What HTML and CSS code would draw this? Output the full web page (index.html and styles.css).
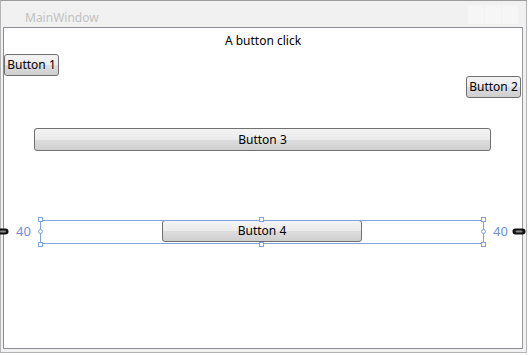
FILE: index.html
```html
<!DOCTYPE html>
<html lang="en">
<head>
    <meta charset="UTF-8">
    <title>MainWindow</title>
    <link rel="stylesheet" href="styles.css">
</head>
<body>
    <div class="window">
        <div class="title-bar">
            <span class="title">MainWindow</span>
            <div class="caption-buttons">
                <span></span><span></span><span></span>
            </div>
        </div>
        <div class="content">
            <p class="caption">A button click</p>
            <button class="btn btn-1">Button 1</button>
            <button class="btn btn-2">Button 2</button>
            <button class="btn btn-3">Button 3</button>
            <button class="btn btn-4">Button 4</button>

            <!-- designer selection adorner -->
            <div class="selection">
                <span class="handle tl"></span>
                <span class="handle tm"></span>
                <span class="handle tr"></span>
                <span class="handle bl"></span>
                <span class="handle bm"></span>
                <span class="handle br"></span>
                <span class="knob left"></span>
                <span class="knob right"></span>
            </div>
            <span class="margin-label left">40</span>
            <span class="margin-label right">40</span>
            <svg class="anchor left" width="12" height="7" viewBox="0 0 12 7">
                <rect x="0.5" y="0.5" width="11" height="6" rx="3" fill="#111"/>
                <rect x="3" y="2.5" width="6" height="2" rx="1" fill="#888"/>
            </svg>
            <svg class="anchor right" width="14" height="7" viewBox="0 0 14 7">
                <rect x="0.5" y="0.5" width="13" height="6" rx="3" fill="#111"/>
                <rect x="3.5" y="2.5" width="7" height="2" rx="1" fill="#888"/>
            </svg>
        </div>
    </div>
</body>
</html>
```

FILE: styles.css
```css
:root {
    --frame: #f1f1f1; --frame-line: #b4b4b4; --content-line: #8a8d93;
    --title-gray: #c2c2c2; --btn-border: #707070; --adorner: #7fa4dc;
    --label-blue: #6d8fd4;
}
body { margin: 0; background: #ffffff; font-family: "Noto Sans", "Open Sans", sans-serif; }
.window { width: 525px; height: 351px; border: 1px solid var(--frame-line); border-top-color: #9c9c9c; background: var(--frame); display: flex; flex-direction: column; }
.title-bar { height: 26px; display: flex; align-items: center; justify-content: space-between; padding: 0 8px 0 24px; }
.title { font-size: 12px; color: var(--title-gray); padding-top: 6px; }
.caption-buttons { display: flex; gap: 1px; align-self: flex-start; margin-top: 4px; }
.caption-buttons span { width: 16px; height: 19px; background: #f6f6f6; }
.content { position: relative; flex: 1; margin: 0 3px 3px 2px; border: 1px solid var(--content-line); border-right-color: #9a9a9a; background: #ffffff; }
.caption { margin: 5px 0 0; text-align: center; font-size: 12px; line-height: 16px; color: #000; }
.btn { display: block; box-sizing: border-box; height: 22px; padding: 0; border: 1px solid var(--btn-border); border-radius: 3px; background: linear-gradient(#f3f3f3 0%, #ebebeb 50%, #dddddd 51%, #cfcfcf 100%); font-family: "Noto Sans", "Open Sans", sans-serif; font-size: 12px; color: #000; line-height: 18px; }
.btn-1 { width: 55px; margin: 5px 0 0 0; }
.btn-2 { width: 55px; margin: 0 1px 0 auto; }
.btn-3 { width: 457px; height: 23px; margin: 30px 0 0 30px; }
.btn-4 { width: 200px; margin: 69px 0 0 158px; }
.selection { position: absolute; left: 36px; top: 192px; width: 442px; height: 22px; border: 1px solid var(--adorner); }
.handle { position: absolute; width: 3px; height: 3px; border: 1px solid var(--adorner); background: #fff; }
.handle.tl { left: -3px; top: -4px; }
.handle.tm { left: 218px; top: -4px; }
.handle.tr { right: -3px; top: -4px; }
.handle.bl { left: -3px; bottom: -4px; }
.handle.bm { left: 218px; bottom: -4px; }
.handle.br { right: -3px; bottom: -4px; }
.knob { position: absolute; top: 8px; width: 3px; height: 3px; border: 1px solid var(--adorner); border-radius: 50%; background: #fff; }
.knob.left { left: -3px; }
.knob.right { right: -3px; }
.margin-label { position: absolute; top: 195px; font-size: 13px; line-height: 16px; color: var(--label-blue); }
.margin-label.left { left: 12px; }
.margin-label.right { left: 489px; }
.anchor { position: absolute; top: 200px; }
.anchor.left { left: -7px; }
.anchor.right { left: 508px; }
```
